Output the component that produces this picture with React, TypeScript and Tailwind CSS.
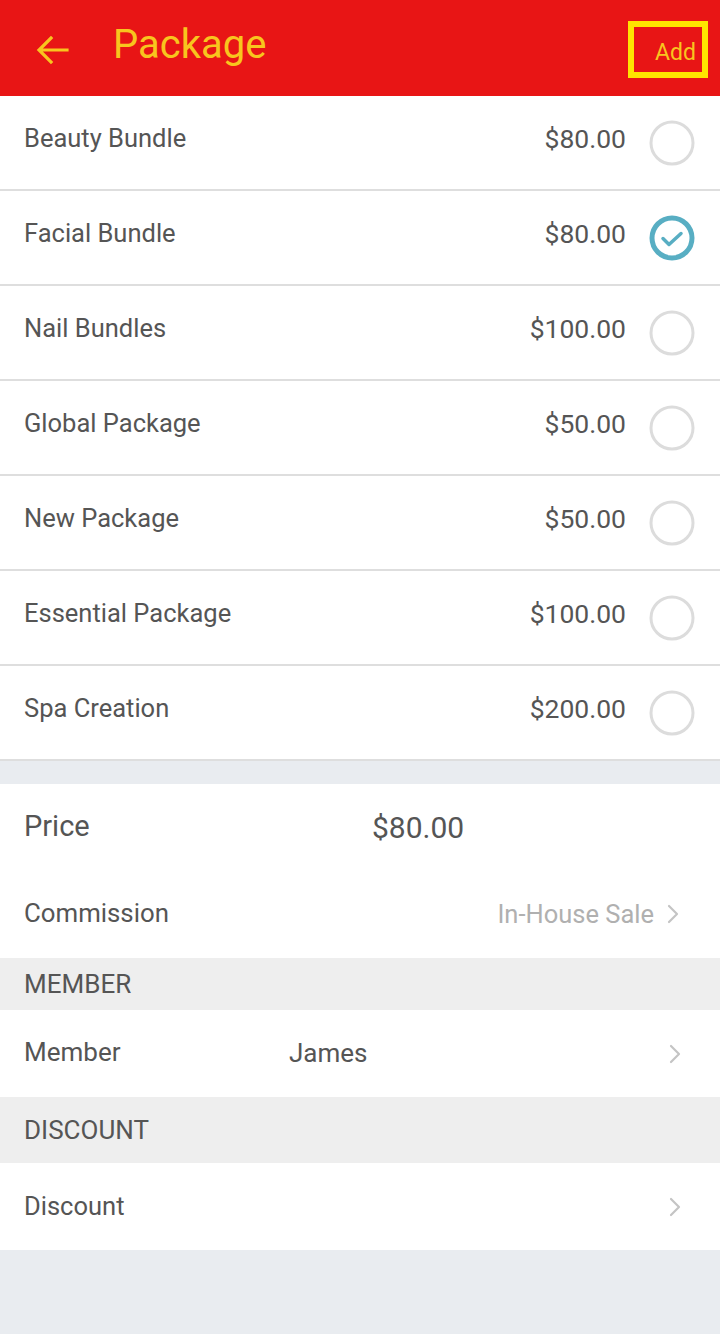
import React from "react";

const items = [
  { name: "Beauty Bundle", price: "$80.00", checked: false },
  { name: "Facial Bundle", price: "$80.00", checked: true },
  { name: "Nail Bundles", price: "$100.00", checked: false },
  { name: "Global Package", price: "$50.00", checked: false },
  { name: "New Package", price: "$50.00", checked: false },
  { name: "Essential Package", price: "$100.00", checked: false },
  { name: "Spa Creation", price: "$200.00", checked: false },
];

function Chevron({ color = "#c4c4c4" }: { color?: string }) {
  return (
    <svg width="14" height="22" viewBox="0 0 14 22" fill="none">
      <path d="M3 3l8 8-8 8" stroke={color} strokeWidth="2.2" strokeLinecap="round" strokeLinejoin="round" />
    </svg>
  );
}

function Radio({ checked }: { checked: boolean }) {
  if (checked) {
    return (
      <svg width="48" height="48" viewBox="0 0 48 48">
        <circle cx="24" cy="24" r="20" fill="none" stroke="#58aec3" strokeWidth="5" />
        <path d="M15 24.5l6 6 12-11" fill="none" stroke="#58aec3" strokeWidth="3.5" strokeLinecap="round" strokeLinejoin="round" />
      </svg>
    );
  }
  return (
    <svg width="48" height="48" viewBox="0 0 48 48">
      <circle cx="24" cy="24" r="21" fill="none" stroke="#dcdcdc" strokeWidth="3" />
    </svg>
  );
}

export default function App() {
  return (
    <div className="w-[720px] h-[1334px] bg-[#e9ecf0] flex flex-col" style={{ fontFamily: "Roboto, 'Noto Sans', sans-serif" }}>
      <div className="h-[96px] bg-[#e81515] flex items-center pl-[36px] pr-[12px]">
        <svg width="34" height="30" viewBox="0 0 34 30" fill="none" className="mt-[4px]">
          <path d="M31 15H4M15 3L3 15l12 12" stroke="#f8c51e" strokeWidth="3.2" strokeLinecap="square" />
        </svg>
        <div className="ml-[43px] text-[40px] text-[#f8c51e] leading-none mb-[6px]">Package</div>
        <div className="flex-1" />
        <div className="w-[80px] h-[57px] border-[6px] border-[#ffe400] flex items-center justify-end pr-[6px] mt-[2px]">
          <span className="text-[23px] text-[#f8c51e] leading-none mt-[6px]">Add</span>
        </div>
      </div>

      <div className="bg-white">
        {items.map((it) => (
          <div key={it.name} className="h-[95px] border-b-2 border-[#dedede] flex items-center pl-[24px] pr-[24px]">
            <span className="text-[25.5px] text-[#555555] mb-[8px]">{it.name}</span>
            <span className="flex-1" />
            <span className="text-[26.5px] text-[#555555] mb-[8px] mr-[22px]">{it.price}</span>
            <Radio checked={it.checked} />
          </div>
        ))}
      </div>

      <div className="h-[23px]" />

      <div className="bg-white">
        <div className="h-[86px] flex items-center pl-[24px]">
          <span className="text-[29px] text-[#555555] w-[348px]">Price</span>
          <span className="text-[30px] text-[#555555]">$80.00</span>
        </div>
        <div className="h-[88px] flex items-center pl-[24px] pr-[40px]">
          <span className="text-[25.8px] text-[#555555] mb-[2px]">Commission</span>
          <span className="flex-1" />
          <span className="text-[25.5px] text-[#b0b0b0] mr-[12px]">In-House Sale</span>
          <Chevron />
        </div>
      </div>

      <div className="h-[52px] bg-[#eeeeee] flex items-center pl-[24px]">
        <span className="text-[26px] text-[#555555]">MEMBER</span>
      </div>
      <div className="h-[87px] bg-white flex items-center pl-[24px] pr-[38px]">
        <span className="text-[26px] text-[#555555] w-[265px] mb-[3px]">Member</span>
        <span className="text-[26px] text-[#555555]">James</span>
        <span className="flex-1" />
        <Chevron />
      </div>
      <div className="h-[66px] bg-[#eeeeee] flex items-center pl-[24px]">
        <span className="text-[26px] text-[#555555]">DISCOUNT</span>
      </div>
      <div className="h-[87px] bg-white flex items-center pl-[24px] pr-[38px]">
        <span className="text-[25.5px] text-[#555555]">Discount</span>
        <span className="flex-1" />
        <Chevron />
      </div>
    </div>
  );
}
